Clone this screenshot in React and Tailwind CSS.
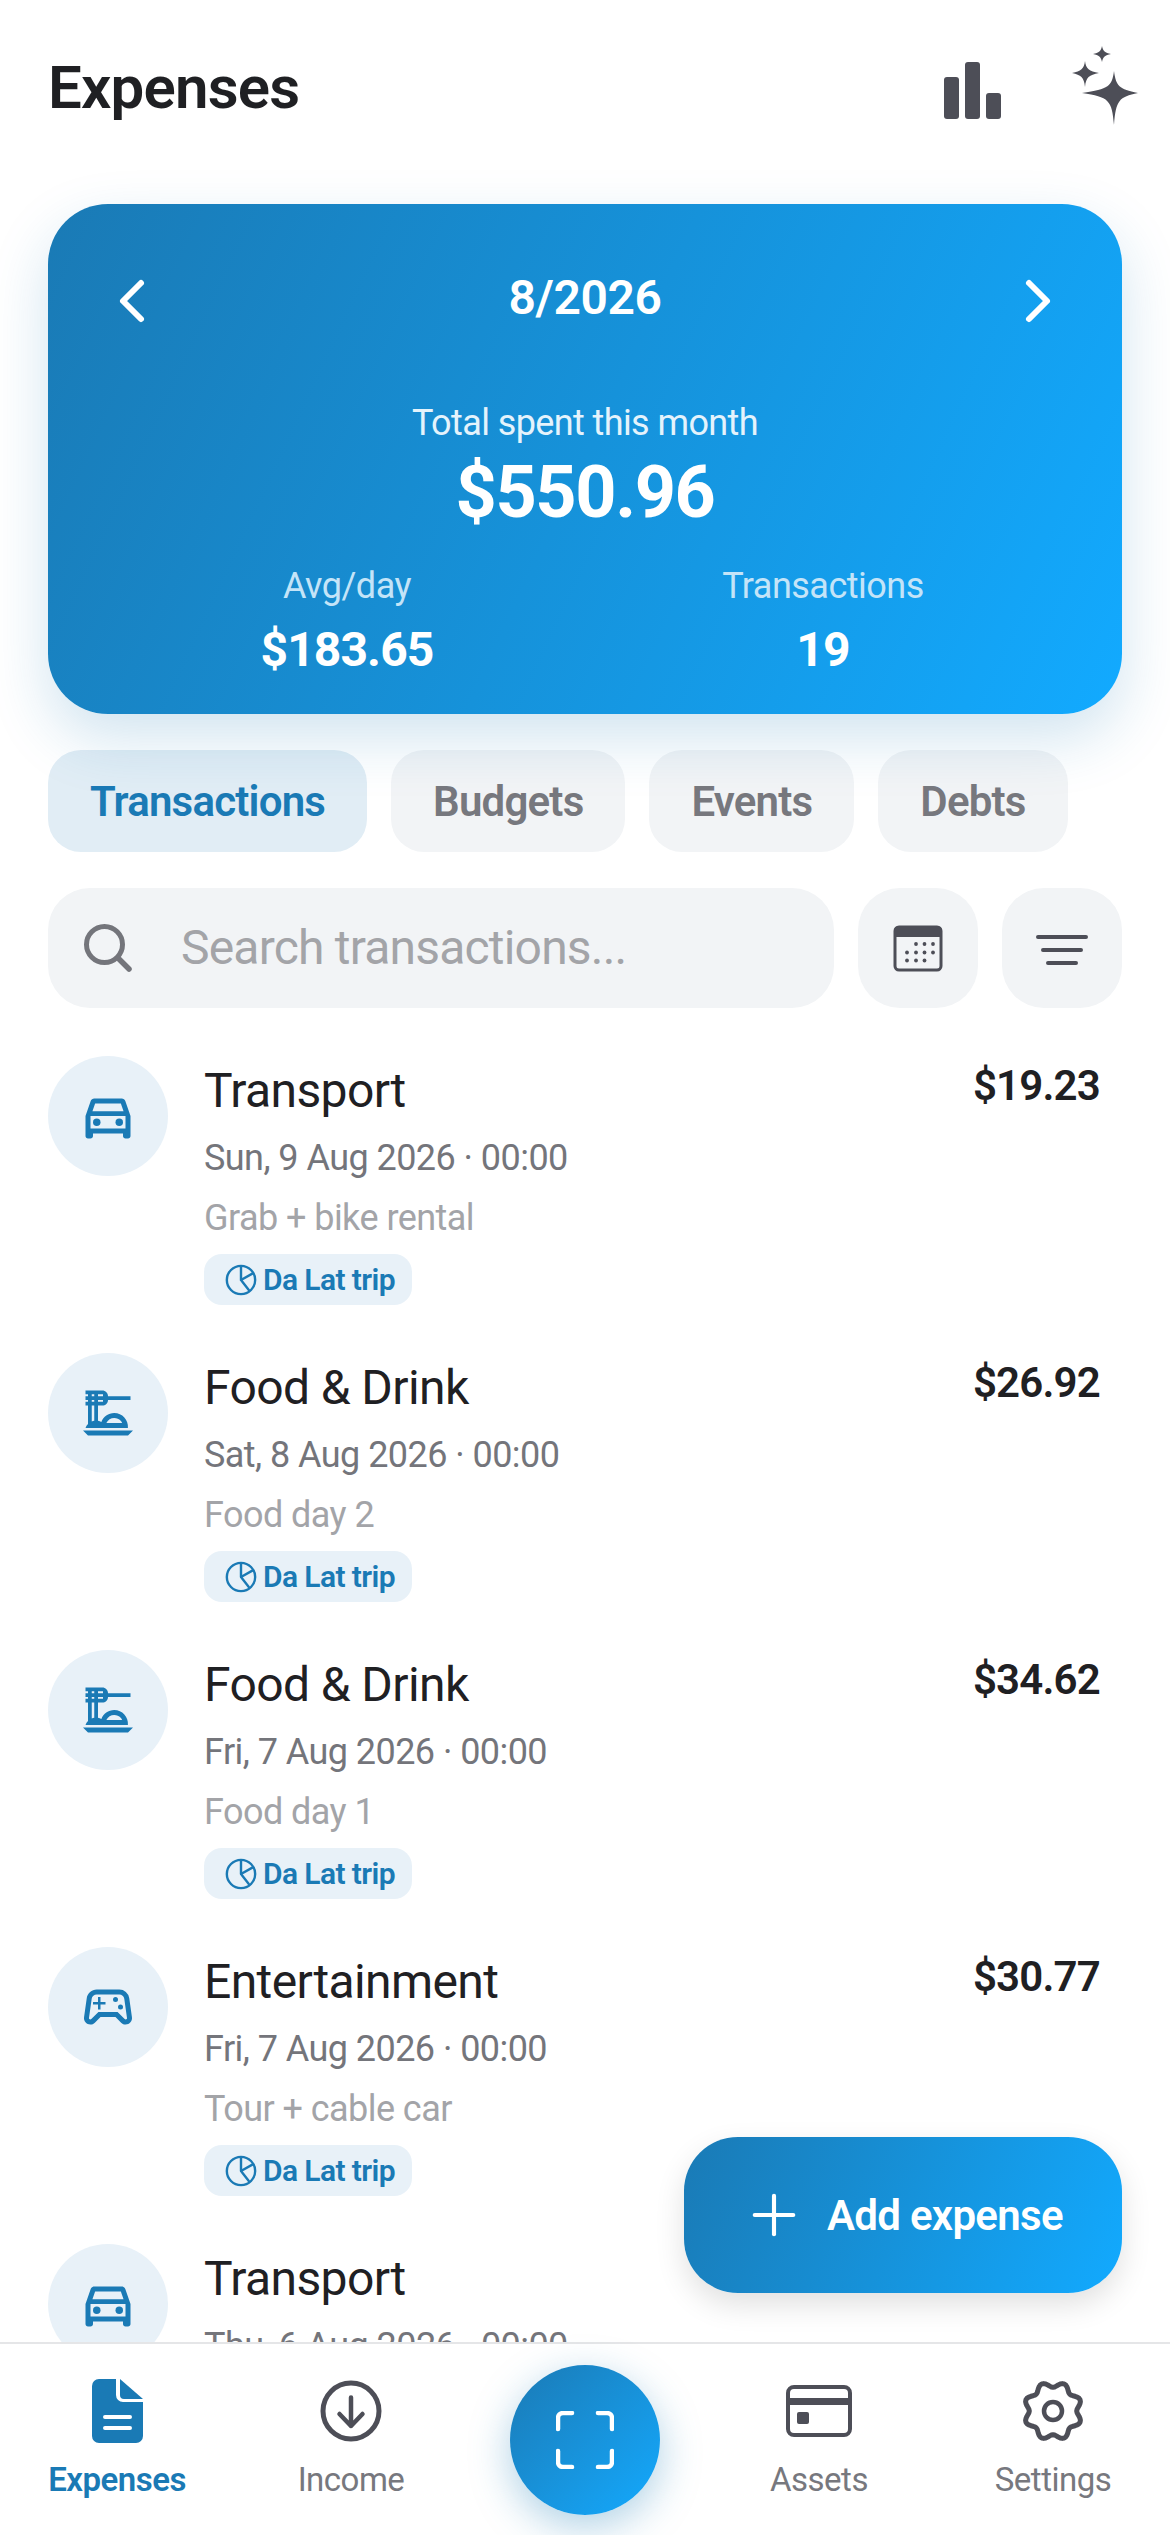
import { MdOutlineDirectionsCar, MdOutlineDinnerDining, MdOutlineSportsEsports } from "react-icons/md";
import { ChevronLeft, ChevronRight, Plus } from "lucide-react";

const transactions = [
  { title: "Transport", date: "Sun, 9 Aug 2026 · 00:00", note: "Grab + bike rental", amount: "$19.23", tag: "Da Lat trip", Icon: MdOutlineDirectionsCar },
  { title: "Food & Drink", date: "Sat, 8 Aug 2026 · 00:00", note: "Food day 2", amount: "$26.92", tag: "Da Lat trip", Icon: MdOutlineDinnerDining },
  { title: "Food & Drink", date: "Fri, 7 Aug 2026 · 00:00", note: "Food day 1", amount: "$34.62", tag: "Da Lat trip", Icon: MdOutlineDinnerDining },
  { title: "Entertainment", date: "Fri, 7 Aug 2026 · 00:00", note: "Tour + cable car", amount: "$30.77", tag: "Da Lat trip", Icon: MdOutlineSportsEsports },
  { title: "Transport", date: "Thu, 6 Aug 2026 · 00:00", Icon: MdOutlineDirectionsCar },
];

function BarsIcon() {
  return (
    <svg viewBox="0 0 60 60" className="w-[60px] h-[60px] fill-[#4d4e57]">
      <rect x="1" y="15" width="15" height="42" rx="3" />
      <rect x="22" y="0" width="15" height="57" rx="3" />
      <rect x="43" y="31" width="15" height="26" rx="3" />
    </svg>
  );
}

function SparkIcon() {
  return (
    <svg viewBox="0 0 66 80" className="w-[66px] h-[80px] fill-[#4d4e57]">
      <path d="M42 25 C44 40 47 43 66 47 C47 51 44 54 42 79 C40 54 37 51 10 47 C37 43 40 40 42 25Z" />
      <path d="M13 15 C14 23 17 25 27 27 C17 29 14 31 13 41 C12 31 9 29 0 27 C9 25 12 23 13 15Z" />
      <path d="M30 0 C31 5 33 7 39 8 C33 9 31 11 30 16 C29 11 27 9 21 8 C27 7 29 5 30 0Z" />
    </svg>
  );
}

function SearchIcon() {
  return (
    <svg viewBox="0 0 48 48" className="w-[48px] h-[48px] shrink-0" fill="none" stroke="#74757b" strokeLinecap="round">
      <circle cx="20.5" cy="20.5" r="18" strokeWidth="5" />
      <path d="M34 34L45 45" strokeWidth="5.5" />
    </svg>
  );
}

function CalendarIcon() {
  const dots = [
    [23, 19], [31.5, 19], [40, 19],
    [14, 27.5], [23, 27.5], [31.5, 27.5], [40, 27.5],
    [14, 35.5], [23, 35.5], [31.5, 35.5],
  ];
  return (
    <svg viewBox="0 0 50 47" className="w-[50px] h-[47px]">
      <rect x="2" y="2" width="46" height="43" rx="4" fill="none" stroke="#4d4e57" strokeWidth="3" />
      <path d="M1 6 a5 5 0 0 1 5 -5 h38 a5 5 0 0 1 5 5 v6 h-48z" fill="#4d4e57" />
      {dots.map(([cx, cy]) => (
        <circle key={cx + "-" + cy} cx={cx} cy={cy} r="1.9" fill="#4d4e57" />
      ))}
    </svg>
  );
}

function FilterIcon() {
  return (
    <svg viewBox="0 0 52 32" className="w-[52px] h-[32px] mt-[3px] stroke-[#4d4e57]" strokeWidth="4" strokeLinecap="round">
      <path d="M2 3h48M7 16h38M12 29h28" />
    </svg>
  );
}

function PieIcon() {
  return (
    <svg viewBox="0 0 24 24" className="w-[34px] h-[34px] shrink-0" fill="none" stroke="#1a7ab5" strokeWidth="1.7" strokeLinecap="round" strokeLinejoin="round">
      <circle cx="12" cy="12" r="10" />
      <path d="M12 2.5V12L20 7.5M12 12l5.5 7" />
    </svg>
  );
}

function DocIcon() {
  return (
    <svg viewBox="0 0 51 64" className="w-[51px] h-[64px]" fill="#1a7ab5">
      <path d="M7 0 H24 V16 a7 7 0 0 0 7 7 H51 V57 a7 7 0 0 1 -7 7 H7 a7 7 0 0 1 -7 -7 V7 a7 7 0 0 1 7 -7z" />
      <path d="M28 0 L51 20 H32 a4 4 0 0 1 -4 -4z" />
      <path d="M13 38h25M13 49h25" stroke="#fff" strokeWidth="4" strokeLinecap="round" />
    </svg>
  );
}

function IncomeIcon() {
  return (
    <svg viewBox="0 0 64 64" className="w-[64px] h-[64px]" fill="none" stroke="#4d4e57" strokeLinecap="round" strokeLinejoin="round">
      <circle cx="32" cy="32" r="28" strokeWidth="5" />
      <path d="M32 18.5V47M20.5 35L32 47L43.5 35" strokeWidth="4.5" />
    </svg>
  );
}

function CardIcon() {
  return (
    <svg viewBox="0 0 66 52" className="w-[66px] h-[52px]">
      <rect x="2" y="2" width="62" height="48" rx="6" fill="none" stroke="#4d4e57" strokeWidth="4" />
      <rect x="2" y="13" width="62" height="7" fill="#4d4e57" />
      <rect x="11" y="27" width="12" height="12" rx="2" fill="#4d4e57" />
    </svg>
  );
}

// eight soft teeth, polar curve sampled once
const gearPath =
  Array.from({ length: 96 }, (_, i) => {
    const a = (i / 96) * Math.PI * 2;
    const r = 26.5 + 2.8 * Math.cos(8 * a - Math.PI);
    return `${i === 0 ? "M" : "L"}${(32 + r * Math.cos(a)).toFixed(2)} ${(32 + r * Math.sin(a)).toFixed(2)}`;
  }).join(" ") + "Z";

function GearIcon() {
  return (
    <svg viewBox="0 0 64 64" className="w-[64px] h-[64px]" fill="none" stroke="#4d4e57" strokeLinejoin="round">
      <path d={gearPath} strokeWidth="5" />
      <circle cx="32" cy="32" r="9" strokeWidth="4.5" />
    </svg>
  );
}

function ScanIcon() {
  return (
    <svg viewBox="0 0 58 58" className="w-[58px] h-[58px]" fill="none" stroke="#fff" strokeWidth="4.5" strokeLinecap="round" strokeLinejoin="round">
      <path d="M2 18V7a5 5 0 0 1 5-5h9M42 2h9a5 5 0 0 1 5 5v11M56 40v11a5 5 0 0 1-5 5h-9M16 56H7a5 5 0 0 1-5-5V40" />
    </svg>
  );
}

function TransactionRow({ item }) {
  const { title, date, note, amount, tag, Icon } = item;
  return (
    <div className="flex h-[297px] shrink-0 px-[48px]">
      <div className="w-[120px] h-[120px] shrink-0 rounded-full bg-[#e8f1f8] flex items-center justify-center">
        <Icon className="text-[60px] text-[#1a7ab5]" />
      </div>
      <div className="ml-[36px] flex-1">
        <p className="mt-[3px] text-[48px] leading-[64px] tracking-[-0.6px] text-[#1f2023]">{title}</p>
        <p className="mt-[10px] text-[36px] leading-[50px] tracking-[-0.55px] text-[#74757b]">{date}</p>
        {note && <p className="mt-[10px] text-[36px] leading-[50px] tracking-[-0.55px] text-[#a3a4a8]">{note}</p>}
        {tag && (
          <div className="mt-[11px] h-[51px] w-[208px] rounded-[18px] bg-[#e8f1f8] flex items-center pl-[20px] gap-[5px]">
            <PieIcon />
            <span className="text-[30px] tracking-[-0.6px] font-semibold text-[#1a7ab5]">{tag}</span>
          </div>
        )}
      </div>
      {amount && <p className="mr-[22px] text-[42px] leading-[60px] tracking-[-0.8px] font-semibold text-[#1f2023]">{amount}</p>}
    </div>
  );
}

function NavItem({ label, active, children }) {
  return (
    <div className="flex-1 flex flex-col items-center">
      <div className="h-[66px] mt-[2px] flex items-center justify-center">{children}</div>
      <span className={`mt-[14px] text-[33px] leading-[44px] tracking-[-0.5px] ${active ? "font-semibold text-[#1a7ab5]" : "text-[#77787e]"}`}>
        {label}
      </span>
    </div>
  );
}

export default function App() {
  return (
    <div className="relative w-[1170px] h-[2535px] bg-white overflow-hidden flex flex-col font-['Roboto',sans-serif]">
      {/* Header */}
      <div className="h-[204px] shrink-0 pl-[48px] pr-[32px] flex items-start justify-between pt-[46px]">
        <h1 className="mt-[2px] text-[60px] leading-[80px] tracking-[-0.8px] font-semibold text-[#1f2023]">Expenses</h1>
        <div className="flex items-start gap-[69px]">
          <div className="pt-[16px]"><BarsIcon /></div>
          <SparkIcon />
        </div>
      </div>

      {/* Month card */}
      <div className="relative z-10 mx-[48px] h-[510px] shrink-0 rounded-[60px] bg-linear-[115deg] from-[#1a7ab5] to-[#12aaff] text-white shadow-[0_24px_60px_rgba(26,122,181,0.2)] flex flex-col">
        <div className="h-[60px] mt-[64px] px-[48px] flex items-center justify-between">
          <ChevronLeft size={72} strokeWidth={2} className="mt-[5px]" />
          <span className="text-[48px] tracking-[-0.4px] font-semibold">8/2026</span>
          <ChevronRight size={72} strokeWidth={2} className="mt-[5px]" />
        </div>
        <p className="mt-[72px] text-center text-[36px] leading-[46px] tracking-[-0.6px] text-[#e4f3fc]">Total spent this month</p>
        <p className="mt-[5px] text-center text-[72px] leading-[84px] tracking-[-1.4px] font-bold">$550.96</p>
        <div className="mt-[28px] flex justify-center">
          <div className="w-[476px] text-center">
            <p className="text-[36px] leading-[46px] tracking-[-0.5px] text-[#c4e4f8]">Avg/day</p>
            <p className="mt-[10px] text-[48px] leading-[62px] tracking-[-0.9px] font-bold">$183.65</p>
          </div>
          <div className="w-[476px] text-center">
            <p className="text-[36px] leading-[46px] tracking-[-0.5px] text-[#c4e4f8]">Transactions</p>
            <p className="mt-[10px] text-[48px] leading-[62px] tracking-[-0.9px] font-bold">19</p>
          </div>
        </div>
      </div>

      {/* Tabs */}
      <div className="mt-[36px] px-[48px] flex gap-[24px] shrink-0">
        <div className="h-[102px] px-[42px] rounded-[33px] bg-[#e1edf5] flex items-center text-[42px] tracking-[-0.8px] font-semibold text-[#1a7ab5]">Transactions</div>
        <div className="h-[102px] px-[42px] rounded-[33px] bg-[#f2f4f6] flex items-center text-[42px] tracking-[-0.8px] font-semibold text-[#77787e]">Budgets</div>
        <div className="h-[102px] px-[42px] rounded-[33px] bg-[#f2f4f6] flex items-center text-[42px] tracking-[-0.8px] font-semibold text-[#77787e]">Events</div>
        <div className="h-[102px] px-[42px] rounded-[33px] bg-[#f2f4f6] flex items-center text-[42px] tracking-[-0.8px] font-semibold text-[#77787e]">Debts</div>
      </div>

      {/* Search */}
      <div className="mt-[36px] px-[48px] flex gap-[24px] shrink-0">
        <div className="w-[786px] h-[120px] rounded-[42px] bg-[#f2f4f6] flex items-center pl-[36px]">
          <SearchIcon />
          <span className="ml-[49px] text-[48px] tracking-[-0.8px] text-[#a3a4a8]">Search transactions...</span>
        </div>
        <div className="w-[120px] h-[120px] rounded-[42px] bg-[#f2f4f6] flex items-center justify-center"><CalendarIcon /></div>
        <div className="w-[120px] h-[120px] rounded-[42px] bg-[#f2f4f6] flex items-center justify-center"><FilterIcon /></div>
      </div>

      {/* List */}
      <div className="mt-[48px] flex-1 min-h-0 overflow-hidden flex flex-col">
        {transactions.map((item, i) => (
          <TransactionRow key={i} item={item} />
        ))}
      </div>

      {/* Bottom nav */}
      <div className="h-[193px] shrink-0 border-t-[2px] border-[#e5e6e8] bg-white flex pt-[32px]">
        <NavItem label="Expenses" active><DocIcon /></NavItem>
        <NavItem label="Income"><IncomeIcon /></NavItem>
        <div className="flex-1 flex justify-center -mt-[11px]">
          <div className="w-[150px] h-[150px] rounded-full bg-gradient-to-br from-[#1a7ab5] to-[#12aaff] flex items-center justify-center shadow-[0_12px_40px_rgba(26,122,181,0.35)]">
            <ScanIcon />
          </div>
        </div>
        <NavItem label="Assets"><CardIcon /></NavItem>
        <NavItem label="Settings"><GearIcon /></NavItem>
      </div>

      {/* Add expense */}
      <div className="absolute left-[684px] top-[2137px] w-[438px] h-[156px] rounded-[54px] bg-linear-[115deg] from-[#1a7ab5] to-[#12aaff] text-white flex items-center pl-[57px] gap-[20px] shadow-[0_12px_30px_rgba(0,0,0,0.12)]">
        <Plus size={66} strokeWidth={1.5} />
        <span className="text-[42px] tracking-[-0.7px] font-semibold">Add expense</span>
      </div>
    </div>
  );
}
